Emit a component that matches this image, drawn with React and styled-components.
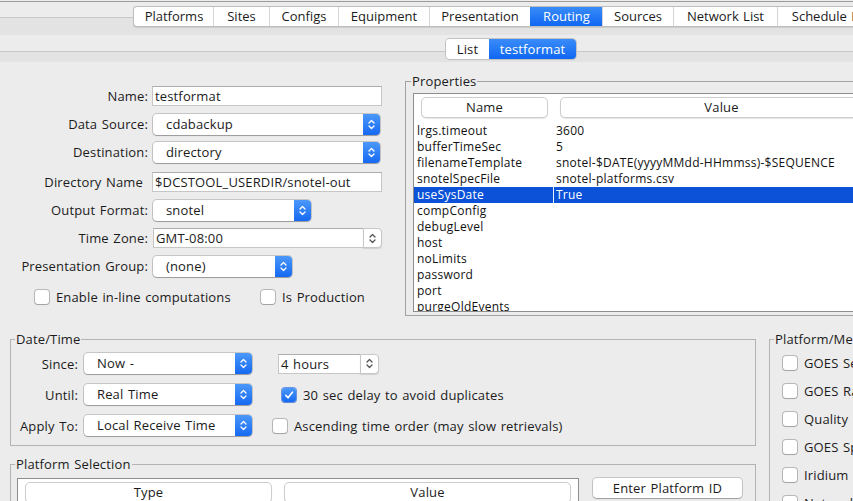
import React from "react";
import styled, { createGlobalStyle } from "styled-components";

const GlobalStyle = createGlobalStyle`
  html, body { margin: 0; padding: 0; background: #ececec; }
  body {
    font-family: "Open Sans", "Liberation Sans", sans-serif;
    font-size: 13px;
    letter-spacing: 0.15px;
    word-spacing: 1px;
    color: #1b1b1b;
  }
  * { box-sizing: border-box; }
`;

const Window = styled.div`
  width: 853px;
  height: 501px;
  overflow: hidden;
  background: #ececec;
  padding-top: 1px;
`;

/* ---------- main tab strip ---------- */
const TabStrip = styled.div`
  height: 34px;
  border-top: 1px solid #9b9b9b;
  padding: 4px 0 0 133px;
  background: linear-gradient(
    to bottom,
    #ececec 0,
    #ececec 15px,
    #c8c8c8 15px,
    #c8c8c8 16px,
    #e3e3e3 16px
  );
`;

const Tabs = styled.div`
  display: flex;
  height: 21px;
  width: max-content;
  background: #fff;
  border: 1px solid #bdbdbd;
  border-right: none;
  border-radius: 4px 0 0 4px;
  box-shadow: 0 1px 1px rgba(0, 0, 0, 0.1);
  overflow: hidden;
`;

const Tab = styled.div`
  width: ${(p) => p.$w}px;
  flex: none;
  text-align: center;
  line-height: 19px;
  letter-spacing: 0;
  white-space: nowrap;
  overflow: hidden;
  border-left: 1px solid ${(p) => (p.$first || p.$active ? "transparent" : "#d6d6d6")};
  color: ${(p) => (p.$active ? "#fff" : "#1b1b1b")};
  background: ${(p) => (p.$active ? "linear-gradient(#3a8cf8, #0f67f2)" : "transparent")};
`;

/* ---------- sub tabs ---------- */
const SubTabRow = styled.div`
  height: 27px;
  padding: 4px 0 0 446px;
  background: linear-gradient(
    to bottom,
    #ececec 0,
    #ececec 16px,
    #c8c8c8 16px,
    #c8c8c8 17px,
    #e3e3e3 17px
  );
`;

const SubTabs = styled.div`
  display: flex;
  height: 20px;
  width: max-content;
  border-radius: 4px;
  overflow: hidden;
  box-shadow: 0 0 0 1px #c2c2c2, 0 1px 1px rgba(0, 0, 0, 0.12);
`;

const SubTab = styled.div`
  width: ${(p) => p.$w}px;
  text-align: center;
  line-height: 20px;
  color: ${(p) => (p.$active ? "#fff" : "#1b1b1b")};
  background: ${(p) => (p.$active ? "linear-gradient(#3a8cf8, #0f67f2)" : "#fff")};
`;

/* ---------- content ---------- */
const Content = styled.div`
  background: #ececec;
`;

const TopSection = styled.div`
  display: flex;
  height: 254px;
`;

const Form = styled.div`
  width: 405px;
  flex: none;
  padding-top: 20px;
`;

const FormRow = styled.div`
  display: flex;
  align-items: center;
  height: 28px;
  margin-top: ${(p) => p.$mt || 0}px;
`;

const Label = styled.span`
  width: ${(p) => p.$w}px;
  flex: none;
  text-align: right;
  padding-right: ${(p) => p.$pr || 0}px;
  margin-right: ${(p) => p.$gap}px;
  white-space: nowrap;
`;

const TextField = styled.div`
  width: ${(p) => p.$w}px;
  height: 20px;
  background: #fff;
  border: 1px solid #c6c6c6;
  border-top-color: #acacac;
  padding-left: 2px;
  line-height: 18px;
  white-space: nowrap;
  overflow: hidden;
`;

const ComboBox = styled.div`
  display: flex;
  width: ${(p) => p.$w}px;
  height: 21px;
  margin-left: ${(p) => p.$ml || 0}px;
  background: #fff;
  border-radius: 4px;
  overflow: hidden;
  box-shadow: 0 0 0 1px rgba(0, 0, 0, 0.16), 0 1px 1px rgba(0, 0, 0, 0.22);
`;

const ComboText = styled.span`
  flex: 1;
  padding-left: 13px;
  line-height: 21px;
  white-space: nowrap;
`;

const ComboArrow = styled.span`
  width: 17px;
  flex: none;
  display: flex;
  align-items: center;
  justify-content: center;
  background: linear-gradient(#4b98f9, #1569f2);
`;

const EditCombo = styled.div`
  display: flex;
  width: ${(p) => p.$w}px;
  height: 20px;
  margin-left: ${(p) => p.$ml || 0}px;
`;

const EditText = styled.span`
  flex: 1;
  background: #fff;
  border: 1px solid #c6c6c6;
  border-top-color: #acacac;
  border-right: none;
  padding-left: 2px;
  line-height: 18px;
  white-space: nowrap;
`;

const EditButton = styled.span`
  width: 19px;
  flex: none;
  display: flex;
  align-items: center;
  justify-content: center;
  background: #fff;
  border: 1px solid #c6c6c6;
  border-radius: 0 4px 4px 0;
  box-shadow: 0 1px 1px rgba(0, 0, 0, 0.12);
`;

const CheckItem = styled.span`
  display: inline-flex;
  align-items: center;
  gap: 7px;
  width: ${(p) => (p.$w ? `${p.$w}px` : "auto")};
  flex: none;
  margin-left: ${(p) => p.$ml || 0}px;
  white-space: nowrap;
`;

const Box = styled.span`
  width: 14px;
  height: 14px;
  flex: none;
  border-radius: 3px;
  display: inline-flex;
  align-items: center;
  justify-content: center;
  background: ${(p) => (p.$checked ? "linear-gradient(#4b98f9, #1569f2)" : "#fff")};
  box-shadow: 0 0 0 1px ${(p) => (p.$checked ? "rgba(20,90,220,0.6)" : "rgba(0,0,0,0.22)")},
    0 1px 1px rgba(0, 0, 0, 0.12);
`;

/* ---------- titled groups ---------- */
const Group = styled.fieldset`
  margin: 0;
  padding: ${(p) => p.$pad};
  border: 1px solid ${(p) => p.$line || "#b3b3b3"};
  min-width: 0;
  width: ${(p) => p.$w}px;
  flex: none;
  margin-top: ${(p) => p.$mt || 0}px;
  margin-left: ${(p) => p.$ml || 0}px;

  legend {
    padding: 0 1px;
    margin-left: ${(p) => p.$lm}px;
    font-size: 13px;
    line-height: 14px;
    white-space: nowrap;
  }
`;

const ScrollPane = styled.div`
  background: #fff;
  border: 1px solid #8e8e8e;
  height: ${(p) => p.$h}px;
  width: ${(p) => p.$w || "auto"};
  overflow: hidden;
`;

const HeaderRow = styled.div`
  display: flex;
  padding: 3px 0 5px 0;
`;

const HeaderCell = styled.div`
  width: ${(p) => p.$w}px;
  flex: none;
  padding: 0 ${(p) => p.$pr || 0}px 0 ${(p) => p.$pl || 0}px;
`;

const HeaderButton = styled.div`
  height: 21px;
  background: #fff;
  border: 1px solid #cdcdcd;
  border-radius: 5px;
  box-shadow: 0 1px 1px rgba(0, 0, 0, 0.1);
  text-align: center;
  line-height: 19px;
  font-size: 13px;
`;

const PropRow = styled.div`
  display: flex;
  height: 16px;
  line-height: 16px;
  font-size: 12px;
  letter-spacing: 0.25px;
  white-space: nowrap;
  background: ${(p) => (p.$selected ? "#0b52d8" : "transparent")};
  color: ${(p) => (p.$selected ? "#fff" : "#111")};
`;

const PropCell = styled.div`
  width: ${(p) => p.$w}px;
  flex: none;
  padding-left: ${(p) => p.$pl}px;
  border-left: 1px solid ${(p) => (p.$sep ? "#e6eefc" : "transparent")};
`;

const BottomSection = styled.div`
  display: flex;
  margin-top: 16px;
  padding-left: 10px;
`;

const LeftColumn = styled.div`
  display: flex;
  flex-direction: column;
  width: 746px;
  flex: none;
`;

const DTRow = styled.div`
  display: flex;
  align-items: center;
  height: 31px;
`;

const SelectionBody = styled.div`
  display: flex;
  align-items: flex-start;
`;

const PushButton = styled.div`
  width: 149px;
  height: 20px;
  margin-left: 14px;
  background: #fff;
  border-radius: 4px;
  box-shadow: 0 0 0 1px rgba(0, 0, 0, 0.16), 0 1px 1px rgba(0, 0, 0, 0.2);
  text-align: center;
  line-height: 20px;
  white-space: nowrap;
`;

const MediaRow = styled.div`
  display: flex;
  align-items: center;
  height: 28px;
`;

/* ---------- icons ---------- */
const UpDown = ({ color = "#fff" }) => (
  <svg width="7" height="11" viewBox="0 0 7 11" fill="none" stroke={color} strokeWidth="1.3" strokeLinecap="round" strokeLinejoin="round">
    <path d="M1 4 L3.5 1.5 L6 4" />
    <path d="M1 7 L3.5 9.5 L6 7" />
  </svg>
);

const Tick = () => (
  <svg width="10" height="10" viewBox="0 0 10 10" fill="none" stroke="#fff" strokeWidth="1.6" strokeLinecap="round" strokeLinejoin="round">
    <path d="M1.8 5.4 L4 7.8 L8.4 2.2" />
  </svg>
);

const Combo = ({ w, ml, children }) => (
  <ComboBox $w={w} $ml={ml}>
    <ComboText>{children}</ComboText>
    <ComboArrow>
      <UpDown />
    </ComboArrow>
  </ComboBox>
);

const Editable = ({ w, ml, children }) => (
  <EditCombo $w={w} $ml={ml}>
    <EditText>{children}</EditText>
    <EditButton>
      <UpDown color="#555" />
    </EditButton>
  </EditCombo>
);

const Check = ({ checked, ml, w, children }) => (
  <CheckItem $ml={ml} $w={w}>
    <Box $checked={checked}>{checked && <Tick />}</Box>
    {children}
  </CheckItem>
);

const tabs = [
  ["Platforms", 79],
  ["Sites", 56],
  ["Configs", 69],
  ["Equipment", 91],
  ["Presentation", 101],
  ["Routing", 72],
  ["Sources", 71],
  ["Network List", 104],
  ["Schedule Entries", 130],
];

const props = [
  ["lrgs.timeout", "3600"],
  ["bufferTimeSec", "5"],
  ["filenameTemplate", "snotel-$DATE(yyyyMMdd-HHmmss)-$SEQUENCE"],
  ["snotelSpecFile", "snotel-platforms.csv"],
  ["useSysDate", "True"],
  ["compConfig", ""],
  ["debugLevel", ""],
  ["host", ""],
  ["noLimits", ""],
  ["password", ""],
  ["port", ""],
  ["purgeOldEvents", ""],
  ["retryDelay", ""],
];

const media = ["GOES Self Timed", "GOES Random", "Quality Notifications", "GOES Spare", "Iridium", "Network DCP"];

export default function App() {
  return (
    <Window>
      <GlobalStyle />
      <TabStrip>
        <Tabs>
          {tabs.map(([t, w], i) => (
            <Tab key={t} $w={w} $first={i === 0} $active={t === "Routing"}>
              {t}
            </Tab>
          ))}
        </Tabs>
      </TabStrip>
      <SubTabRow>
        <SubTabs>
          <SubTab $w={43}>List</SubTab>
          <SubTab $w={87} $active>
            testformat
          </SubTab>
        </SubTabs>
      </SubTabRow>

      <Content>
        <TopSection>
          <Form>
            <FormRow>
              <Label $w={148} $gap={4}>Name:</Label>
              <TextField $w={230}>testformat</TextField>
            </FormRow>
            <FormRow>
              <Label $w={148} $gap={5}>Data Source:</Label>
              <Combo w={227}>cdabackup</Combo>
            </FormRow>
            <FormRow>
              <Label $w={148} $gap={5}>Destination:</Label>
              <Combo w={227}>directory</Combo>
            </FormRow>
            <FormRow $mt={2}>
              <Label $w={148} $pr={5} $gap={4}>Directory Name</Label>
              <TextField $w={230}>$DCSTOOL_USERDIR/snotel-out</TextField>
            </FormRow>
            <FormRow>
              <Label $w={148} $gap={5}>Output Format:</Label>
              <Combo w={158}>snotel</Combo>
            </FormRow>
            <FormRow>
              <Label $w={148} $gap={5}>Time Zone:</Label>
              <Editable w={229}>GMT-08:00</Editable>
            </FormRow>
            <FormRow>
              <Label $w={148} $gap={5}>Presentation Group:</Label>
              <Combo w={139}>(none)</Combo>
            </FormRow>
            <FormRow $mt={3}>
              <Check ml={35} w={226}>Enable in-line computations</Check>
              <Check>Is Production</Check>
            </FormRow>
          </Form>

          <Group $w={480} $mt={12} $pad="5px 0 3px 7px" $lm={-2} $line="#a2a2a2">
            <legend>Properties</legend>
            <ScrollPane $h={219}>
              <HeaderRow>
                <HeaderCell $w={139} $pl={7} $pr={5}>
                  <HeaderButton>Name</HeaderButton>
                </HeaderCell>
                <HeaderCell $w={330} $pl={7}>
                  <HeaderButton>Value</HeaderButton>
                </HeaderCell>
              </HeaderRow>
              {props.map(([n, v]) => {
                const sel = n === "useSysDate";
                return (
                  <PropRow key={n} $selected={sel}>
                    <PropCell $w={139} $pl={2}>{n}</PropCell>
                    <PropCell $w={330} $pl={2} $sep={sel}>
                      {v}
                    </PropCell>
                  </PropRow>
                );
              })}
            </ScrollPane>
          </Group>
        </TopSection>

        <BottomSection>
          <LeftColumn>
            <Group $w={746} $pad="2px 0 4px 0" $lm={4}>
              <legend>Date/Time</legend>
              <DTRow>
                <Label $w={67} $gap={6}>Since:</Label>
                <Combo w={168}>Now -</Combo>
                <Editable w={101} ml={26}>4 hours</Editable>
              </DTRow>
              <DTRow>
                <Label $w={67} $gap={6}>Until:</Label>
                <Combo w={168}>Real Time</Combo>
                <Check checked ml={30}>30 sec delay to avoid duplicates</Check>
              </DTRow>
              <DTRow>
                <Label $w={67} $gap={6}>Apply To:</Label>
                <Combo w={168}>Local Receive Time</Combo>
                <Check ml={21}>Ascending time order (may slow retrievals)</Check>
              </DTRow>
            </Group>

            <Group $w={746} $mt={11} $pad="7px 0 0 6px" $lm={-2}>
              <legend>Platform Selection</legend>
              <SelectionBody>
                <ScrollPane $h={60} $w="562px">
                  <HeaderRow>
                    <HeaderCell $w={266} $pl={7} $pr={12}>
                      <HeaderButton>Type</HeaderButton>
                    </HeaderCell>
                    <HeaderCell $w={287}>
                      <HeaderButton>Value</HeaderButton>
                    </HeaderCell>
                  </HeaderRow>
                </ScrollPane>
                <PushButton>Enter Platform ID</PushButton>
              </SelectionBody>
            </Group>
          </LeftColumn>

          <Group $w={200} $ml={13} $pad="3px 0 0 13px" $lm={-9}>
            <legend>Platform/Media Types</legend>
            {media.map((m) => (
              <MediaRow key={m}>
                <Check>{m}</Check>
              </MediaRow>
            ))}
          </Group>
        </BottomSection>
      </Content>
    </Window>
  );
}
